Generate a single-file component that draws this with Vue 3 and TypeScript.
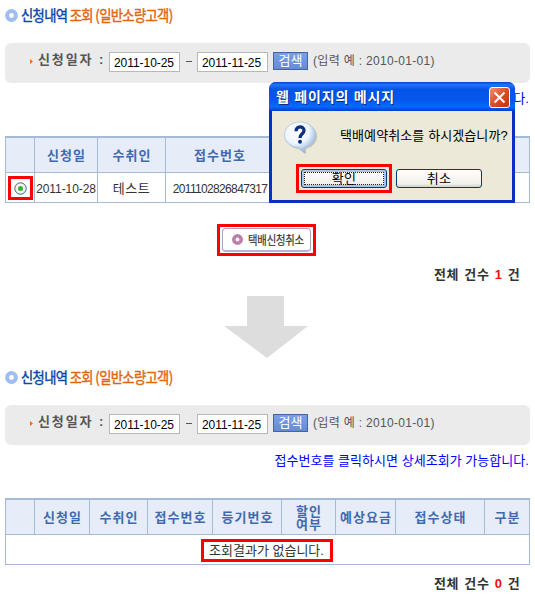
<script setup lang="ts">
import { ref } from 'vue'

interface Column { label: string; width: number }

const startDate = ref('2011-10-25')
const endDate = ref('2011-11-25')
const dialogOpen = ref(true)

const pendingColumns: Column[] = [
  { label: '', width: 29 },
  { label: '신청일', width: 63 },
  { label: '수취인', width: 68 },
  { label: '접수번호', width: 108 },
  { label: '', width: 257 },
]

const resultColumns: Column[] = [
  { label: '', width: 29 },
  { label: '신청일', width: 55 },
  { label: '수취인', width: 58 },
  { label: '접수번호', width: 65 },
  { label: '등기번호', width: 69 },
  { label: '할인\n여부', width: 54 },
  { label: '예상요금', width: 60 },
  { label: '접수상태', width: 89 },
  { label: '구분', width: 46 },
]

const steps = [
  { id: 'before', columns: pendingColumns, hasRow: true, count: 1 },
  { id: 'after', columns: resultColumns, hasRow: false, count: 0 },
]
</script>

<template>
  <main class="page">
    <template v-for="step in steps" :key="step.id">
      <section class="panel" :class="step.id">
        <h1 class="title">
          <svg class="bullet" viewBox="0 0 13 13"><circle cx="6.5" cy="6.5" r="4.4" fill="#fff" stroke="#9fbdf2" stroke-width="4" /></svg>
          <span class="title-text"><b>신청내역</b> 조회 (일반소량고객)</span>
        </h1>
        <div class="search">
          <svg class="mark" viewBox="0 0 3 5"><path d="M0 0L3 2.5L0 5Z" fill="#f26a0a" /></svg>
          <span class="label">신청일자 :</span>
          <input v-model="startDate" class="date" />
          <span class="dash"></span>
          <input v-model="endDate" class="date" />
          <button class="find">검색</button>
          <span class="example">(입력 예 : 2010-01-01)</span>
        </div>
        <p class="notice">접수번호를 클릭하시면 상세조회가 가능합니다.</p>
        <div class="grid">
          <div class="row head">
            <div v-for="(column, i) in step.columns" :key="i" class="cell" :style="{ width: column.width + 'px' }">
              <span>{{ column.label }}</span>
            </div>
          </div>
          <div v-if="step.hasRow" class="row">
            <div class="cell pick">
              <span class="radio-box">
                <svg viewBox="0 0 13 13"><circle cx="6.5" cy="6.5" r="5.7" fill="#f5f5ef" stroke="#355f86" /><circle cx="6.5" cy="6.5" r="2.5" fill="#32b62c" /></svg>
              </span>
            </div>
            <div class="cell day">2011-10-28</div>
            <div class="cell name">테스트</div>
            <div class="cell number">2011102826847317</div>
            <div class="cell rest"></div>
          </div>
          <div v-else class="row">
            <div class="cell empty"><span>조회결과가 없습니다.</span></div>
          </div>
        </div>
        <div v-if="step.hasRow" class="actions">
          <span class="cancel-box">
            <button class="cancel">
              <svg viewBox="0 0 11 11"><circle cx="5.5" cy="5.5" r="3.7" fill="#fff" stroke="#bb7daa" stroke-width="3.5" /></svg>
              <span>택배신청취소</span>
            </button>
          </span>
        </div>
        <p class="total">전체 건수 <em>{{ step.count }}</em> 건</p>
      </section>
      <svg v-if="step.hasRow" class="arrow" viewBox="0 0 84 62"><path d="M23 0H60V30H84L43 62L0 30H23Z" fill="#ddd" /></svg>
    </template>

    <div v-if="dialogOpen" class="dialog">
      <header class="caption">
        <span>웹 페이지의 메시지</span>
        <button class="close" @click="dialogOpen = false">
          <svg viewBox="0 0 21 21"><path d="M5 5L16 16M16 5L5 16" stroke="#fff" stroke-width="2.3" /></svg>
        </button>
      </header>
      <div class="message">
        <svg class="question" viewBox="0 0 34 34">
          <defs>
            <radialGradient id="bubble" cx=".4" cy=".3" r=".72">
              <stop offset="0" stop-color="#fff" /><stop offset=".55" stop-color="#eef5fc" /><stop offset="1" stop-color="#86aedb" />
            </radialGradient>
          </defs>
          <path d="M16.5 2C25.500 2 32 7.500 32 14.700C32 20.500 27.500 25.500 21 27V32.500L14 27.300C6.500 26.500 1 21.500 1 14.700C1 7.500 7.500 2 16.500 2Z" fill="#777" opacity=".35" transform="translate(1 .8)" />
          <path d="M16 1C25 1 31.500 6.800 31.500 14C31.500 20 27 25 20.500 26.500V32L14 26.800C6.500 26 .5 21 .5 14C.5 6.800 7 1 16 1Z" fill="url(#bubble)" stroke="#a8c0dc" stroke-width=".7" />
          <path d="M12 10.200C12 4.600 20 4.600 20 9.500C20 12.800 16 12.800 16 17" fill="none" stroke="#0b3080" stroke-width="3.300" />
          <circle cx="16" cy="20.700" r="2" fill="#0b3080" />
        </svg>
        <span>택배예약취소를 하시겠습니까?</span>
      </div>
      <div class="choices">
        <span class="confirm-box"><button class="xp default">확인</button></span>
        <button class="xp">취소</button>
      </div>
    </div>
  </main>
</template>

<style>
body { margin: 0; background: #fff; }
</style>

<style scoped>
* { box-sizing: border-box; }
.page {
  position: relative; width: 535px; height: 600px; overflow: hidden; background: #fff;
  display: flex; flex-direction: column;
  font: 12px/14px "Liberation Sans", "Noto Sans CJK KR", sans-serif; color: #333;
}
button { padding: 0; font: inherit; white-space: nowrap; }
svg { display: block; flex: none; }
p { margin: 0; }
.panel { display: flex; flex-direction: column; width: 525px; margin-left: 5px; }
.before { height: 296px; }
.after { height: 242px; }
.title { display: flex; align-items: center; height: 30px; margin: 0 0 13px; gap: 4px; }
.after .title { height: 38px; margin-bottom: 9px; }
.bullet { width: 13px; height: 13px; }
.title-text {
  color: #df680f; font: 15px/20px "Noto Sans CJK KR", sans-serif; letter-spacing: -.7px;
  -webkit-text-stroke: .45px currentColor;
  transform: scaleX(.885); transform-origin: left; white-space: nowrap; margin-left: -1px;
}
.title-text b { color: #0b46a8; font-weight: 400; }
.search { display: flex; align-items: flex-start; height: 40px; padding: 9px 0 0 25px; border-radius: 6px; background: #ebebeb; }
.mark { width: 3px; height: 5px; margin-top: 7px; }
.label { width: 71px; margin: 1px 0 0 5px; font-weight: bold; font-size: 13px; letter-spacing: 1.9px; color: #555; white-space: nowrap; }
.date {
  width: 71px; height: 20px; padding: 2px 0 0 4px; border: 1px solid #b7b7b7; border-radius: 0;
  background: #fff; color: #000; font: 12px "Liberation Sans", sans-serif; letter-spacing: -.05px; outline: 0;
}
.dash { width: 6px; height: 1px; margin: 9px 5px 0 6px; background: #555; }
.find {
  width: 35px; height: 18px; margin-left: 5px; border: 1px solid #4564a4;
  background: linear-gradient(#7aa0e3, #668bd5); color: #fff; font-size: 13px; line-height: 16px;
}
.example { margin: 2px 0 0 5px; color: #555; letter-spacing: .32px; white-space: nowrap; }
.notice { height: 53px; padding: 9px 1px 0 0; text-align: right; color: #00f; font-size: 13px; letter-spacing: .04px; white-space: nowrap; }
.grid { border-top: 2px solid #a4bad6; border-right: 1px solid #a4bad6; }
.row { display: flex; height: 30px; border-bottom: 1px solid #a4bad6; }
.head { height: 35px; background: #e6edf9; color: #4069ad; font-weight: bold; }
.cell {
  display: flex; flex: none; align-items: center; justify-content: center;
  border-left: 1px solid #a4bad6; white-space: pre; overflow: hidden;
}
.head .cell { font-size: 13px; letter-spacing: 1.1px; line-height: 13px; text-align: center; padding: 1px 0 0 1px; }
.head .cell:last-child { flex: 1; }
.pick { width: 29px; }
.day { width: 63px; letter-spacing: -.08px; padding-top: 2px; }
.name { width: 68px; font-size: 13px; letter-spacing: .6px; padding-top: 2px; }
.number { width: 108px; letter-spacing: -.66px; padding: 2px 0 0 1px; }
.rest { flex: 1; }
.radio-box { display: grid; place-items: center; width: 25px; height: 24px; border: 3px solid #f00; margin-top: 1px; }
.radio-box svg { width: 13px; height: 13px; }
.empty { flex: 1; }
.empty span { width: 132px; height: 23px; border: 3px solid #f00; text-align: center; font-size: 13px; line-height: 18px; margin: 1px 2px 0 0; }
.actions { display: flex; justify-content: center; height: 53px; padding-top: 21px; margin-left: -2px; }
.cancel-box { display: grid; place-items: center; width: 99px; height: 32px; border: 3px solid #f00; padding-top: 0; }
.cancel {
  display: flex; align-items: center; gap: 5px; width: 89px; height: 24px; padding-left: 9px;
  border: 1px solid #aaa0bf; border-bottom: 2px solid #bdb2cc; border-radius: 4px; background: #fff;
}
.cancel svg { width: 11px; height: 11px; }
.cancel span { font: 12px/14px "Noto Sans CJK KR", sans-serif; letter-spacing: -.2px; color: #333; transform: scaleX(.86); transform-origin: left; -webkit-text-stroke: .2px #333; }
.total { align-self: flex-end; margin: 12px 9px 0 0; width: 87px; font-weight: bold; font-size: 13px; letter-spacing: .6px; word-spacing: 1px; white-space: nowrap; }
.total em { color: #e11; font-style: normal; }
.arrow { width: 84px; height: 62px; margin-left: 224px; }

.dialog {
  position: absolute; left: 269px; top: 82px; width: 246px; height: 121px;
  border: solid #0831c4; border-width: 0 3px 3px; border-radius: 7px 7px 0 0; background: #ece9d8; color: #000;
}
.caption {
  display: flex; justify-content: space-between; align-items: flex-start; height: 29px; margin: 0 -3px; padding: 5px 5px 0 7px;
  border-radius: 7px 7px 0 0; color: #fff; font-size: 14px; font-weight: bold; line-height: 20px; letter-spacing: .8px;
  background: linear-gradient(#0742c8, #1979ff 10%, #0453e4 25%, #0558ee 65%, #066aff 85%, #003dd0);
  text-shadow: 1px 1px #092b80;
}
.close { width: 21px; height: 21px; border: 1px solid #fff; border-radius: 3px; background: linear-gradient(135deg, #f09478, #dc4c26 50%, #bf3512); }
.close svg { width: 19px; height: 19px; }
.message { display: flex; align-items: flex-start; height: 53px; padding: 10px 0 0 12px; }
.message .question { width: 34px; height: 34px; }
.message span { margin: 8px 0 0 22px; font-size: 13px; letter-spacing: .1px; white-space: nowrap; }
.choices { display: flex; align-items: center; margin-left: 24px; gap: 4px; }
.confirm-box { display: grid; place-items: center; width: 96px; height: 29px; border: 3px solid #f00; }
.xp {
  width: 86px; height: 19px; border: 1px solid #003c74; border-radius: 3px; color: #000; font-size: 13px; line-height: 14px; letter-spacing: .2px;
  background: linear-gradient(#fff, #f1f0e9 80%, #d8d0c4);
}
.default { box-shadow: inset 0 0 0 2px #a9c4ef; outline: 1px dotted #222; outline-offset: -4px; }
</style>
